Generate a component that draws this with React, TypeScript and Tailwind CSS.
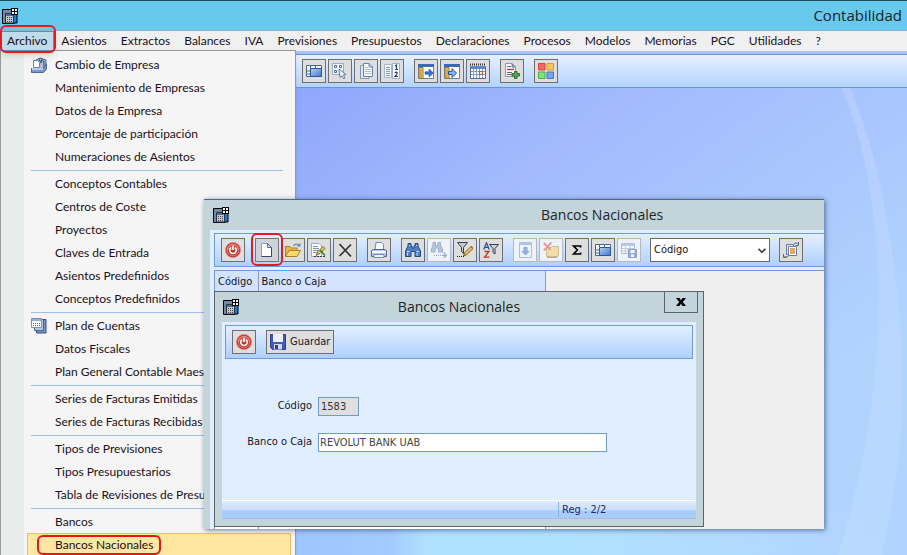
import React from 'react';

const navy = '#1f3f78';

interface IconProps {
  children: React.ReactNode;
}

const Icon: React.FC<IconProps> = ({ children }) => (
  <svg viewBox="0 0 16 16" className="size-4 shrink-0" fill="none" aria-hidden="true">
    {children}
  </svg>
);

const AppIcon = () => (
  <Icon>
    <path d="M0.5 1.5H12V15.5H0.5Z" fill="#6d8aab" stroke="#000" />
    <path d="M11 5H15V15H11Z" fill="#1d7be0" stroke="#000" />
    <path d="M3.5 5.5H11.5V15H3.5Z" fill="#c3c8cd" stroke="#2a3440" />
    <path d="M4 6H11V8H4Z" fill="#4d6f94" />
    <path d="M5 9.5H6M7 9.5H8M9 9.5H10M5 11.5H6M7 11.5H8M9 11.5H10M5 13.5H6M7 13.5H8M9 13.5H10" stroke="#39424e" />
    <path d="M5 11.5H6" stroke="#c23b3b" />
    <path d="M9 0H16V7H9Z" fill="#000" />
    <path d="M10 1H12V3H10ZM13 1H15V3H13ZM10 4H12V6H10ZM13 4H15V6H13Z" fill="#fff" />
  </Icon>
);

const PowerIcon = () => (
  <Icon>
    <circle cx="8" cy="8" r="7.6" fill="#c2322c" stroke="#d98a84" strokeWidth="0.8" />
    <circle cx="8" cy="8" r="5.8" fill="#d8574e" stroke="#f3bab4" strokeWidth="0.7" />
    <path d="M2.4 8A5.6 5.6 0 0 0 13.6 8Z" fill="#c53a33" />
    <path d="M6 5.6A3.3 3.3 0 1 0 10 5.6" stroke="#fff" strokeWidth="1.5" />
    <path d="M8 3.6V8" stroke="#fff" strokeWidth="1.6" />
  </Icon>
);

const WindowIcon = () => (
  <Icon>
    <defs>
      <linearGradient id="pane" x1="0" y1="0" x2="1" y2="1">
        <stop offset="0" stopColor="#b5d2fb" />
        <stop offset="1" stopColor="#3f74cc" />
      </linearGradient>
    </defs>
    <path d="M0.5 2.5H15.5V13.5H0.5Z" fill="#f4f8ff" stroke="#4a6698" />
    <path d="M4.5 5.5H15.5V13.5H4.5Z" fill="url(#pane)" stroke="#2c56a0" />
    <path d="M4.5 2.5V5M9.5 2.5V5M1 8H4M1 11H4" stroke="#4a6698" />
  </Icon>
);

const PointerGridIcon = () => (
  <Icon>
    <path d="M0.5 0.5H11.5V11.5H0.5Z" fill="#eef3fb" stroke="#9dacc6" />
    <path d="M2.5 2.5H4.5V4.5H2.5ZM7.5 2.5H9.5V4.5H7.5ZM2.5 7.5H4.5V9.5H2.5Z" stroke="#516c9c" />
    <path d="M7 6L14 11.4L11.4 12L13 15L11.4 15.8L9.8 12.8L7.8 14.4Z" fill="#e9eef6" stroke="#5c6f92" strokeWidth="0.9" />
  </Icon>
);

const PagesIcon = () => (
  <Icon>
    <path d="M2.5 2.5H11V15.5H2.5Z" fill="#e2eaf6" stroke="#8195b8" />
    <path d="M5.5 0.5H11L14.5 4V13.5H5.5Z" fill="#f7faff" stroke="#6880a8" />
    <path d="M11 0.5V4H14.5" stroke="#6880a8" />
    <path d="M7 4.5H10M7 6.5H13M7 8.5H13M7 10.5H13" stroke="#a9bbd8" />
  </Icon>
);

const NumbersIcon = () => (
  <Icon>
    <path d="M0.5 1.5H7.5V14.5H0.5Z" fill="#f3f6fb" stroke="#a7b4cb" />
    <path d="M2 4.5H6M2 6.5H6M2 8.5H6M2 10.5H6M2 12.5H6" stroke="#8398bd" />
    <path d="M8.5 0.5H15.5V15.5H8.5Z" fill="#fff" stroke="#a0afc8" />
    <path d="M11 3L12.5 2V6.5M11 6.5H14" stroke={navy} strokeWidth="1.2" />
    <path d="M10.8 10Q12.3 8.4 13.2 9.8Q13.4 11 11 13.5H14" stroke={navy} strokeWidth="1.2" />
  </Icon>
);

const PanelArrowIcon = ({ near }: { near?: boolean }) => (
  <Icon>
    <path d="M0.5 1.5H15.5V15.5H0.5Z" fill="#fff" stroke="#5f7fb6" />
    <path d="M0 1H16V4H0Z" fill="#3a69b8" />
    <path d="M1 4.5H5V15.5H1Z" fill="#eec95d" stroke="#96782a" />
    <path d="M3 6V15" stroke="#b6913a" />
    {near ? (
      <path d="M4.5 8.5H8V5.5L12.5 10L8 14.5V11.5H4.5Z" fill="#8eb4ef" stroke="#2550a0" />
    ) : (
      <path d="M7 8.8H11V6L15.5 10L11 14V11.2H7Z" fill="#3973cf" stroke="#2550a0" strokeWidth="0.6" />
    )}
  </Icon>
);

const CalendarIcon = () => (
  <Icon>
    <path d="M0.5 3.5H15.5V15.5H0.5Z" fill="#fff" stroke="#4a6ca4" />
    <path d="M1 3H15V6H1Z" fill="#5f88cb" />
    <path d="M0 1.5H16" stroke="#333" strokeWidth="2" strokeDasharray="1 1" />
    <path d="M3.5 6V15M6.5 6V15M9.5 6V15M12.5 6V15M1 8.5H15M1 11.5H15" stroke="#7f9ccb" />
    <path d="M9.5 8.5H12.5V11.5H9.5Z" stroke="#d0483e" />
  </Icon>
);

const AddDocIcon = () => (
  <Icon>
    <path d="M1.5 0.5H8L11.5 4V13.5H1.5Z" fill="#f7f9fd" stroke="#8c98ab" />
    <path d="M8 0.5V4H11.5" fill="#7a8799" stroke="#7a8799" />
    <path d="M3 3.5H7M3 9.5H8M3 11.5H8" stroke="#666" />
    <path d="M3 6.5H10" stroke="#c8393e" strokeWidth="1.4" />
    <path d="M10.5 8.5H13V10.5H15.5V13H13V15.5H10.5V13H8V10.5H10.5Z" fill="#5aa558" stroke="#2c6e33" />
  </Icon>
);

const TilesIcon = () => (
  <Icon>
    <path d="M0.5 0.5H7V7H0.5Z" fill="#ee6a63" stroke="#d3463f" />
    <path d="M9 0.5H15.5V7H9Z" fill="#f7c55b" stroke="#da9c2d" />
    <path d="M0.5 9H7V15.5H0.5Z" fill="#82df7d" stroke="#4bb04c" />
    <path d="M9 9H15.5V15.5H9Z" fill="#76a5ee" stroke="#4778cd" />
  </Icon>
);

const NewDocIcon = () => (
  <Icon>
    <path d="M2.5 1.5H8.5L12.5 5.5V14.5H2.5Z" fill="#fff" stroke="#8fa0bd" />
    <path d="M8.5 1.5V5.5H12.5Z" fill="#cddaee" stroke="#5d7195" />
    <path d="M12.5 5.5V14.5H2.5" stroke="#35486c" />
  </Icon>
);

const OpenIcon = () => (
  <Icon>
    <path d="M0.5 14.5V4.5H5L6.5 6H12V8.5" fill="#e9b93f" stroke="#a98129" />
    <path d="M0.5 14.5L4 8.5H15.5L12 14.5Z" fill="#fbd96c" stroke="#a98129" />
    <path d="M8.5 4Q11 0.5 14 3.2M14.8 1.2V4H12" stroke="#6482b3" strokeWidth="1.2" />
  </Icon>
);

const EditIcon = () => (
  <Icon>
    <path d="M0.5 1.5H8L10.5 4V14.5H0.5Z" fill="#fafcff" stroke="#9dacc7" />
    <path d="M2 4.5H7M2 6.5H8M2 8.5H8M2 10.5H6" stroke="#7a91b8" />
    <path d="M5 13.5L7 9.5L12 4.5L14 6.5L9 11.5Z" fill="#e6c452" stroke="#5d6428" strokeWidth="0.9" />
    <path d="M9 8L14 13.5" stroke="#3e7d41" strokeWidth="1.6" />
    <path d="M3 14.5H15" stroke="#2e3b50" strokeDasharray="2 1" />
  </Icon>
);

const DeleteIcon = () => (
  <Icon>
    <path d="M2.5 2L14 14.5M14 2.5L2.5 14" stroke="#333" strokeWidth="1.7" />
  </Icon>
);

const PrintIcon = () => (
  <Icon>
    <path d="M4 8L5 0.5H10.5L12.5 2.5V8" fill="#fff" stroke="#7089b2" />
    <path d="M0.5 8.5L2.5 7.5H13.5L15.5 8.5V14.5H0.5Z" fill="#b9cae5" stroke="#496594" />
    <path d="M1 10H15" stroke="#f6faff" strokeWidth="2" />
    <path d="M3 12.5H13V15.5H3Z" fill="#f0f5fc" stroke="#7089b2" />
  </Icon>
);

const FindIcon = () => (
  <Icon>
    <path d="M3 1.5H6V4H7V6H9V4H10V1.5H13V4L15.5 9V14.5H10V9.5H6V14.5H0.5V9L3 4Z" fill="#4f7fc8" stroke="#234a85" />
    <path d="M2 9.5H4.5M11.5 9.5H14M4 3.5H5M11 3.5H12M2.5 11V13.5M12 11V13.5" stroke="#d7e6fc" />
  </Icon>
);

const FindNextIcon = () => (
  <Icon>
    <path d="M2 0.5H4.5V3.5H7V0.5H9.5V3L11.5 7V10H7.5V6H4V10H0.5V7L2 3.5Z" fill="#7f9cce" stroke="#4c6ba5" />
    <path d="M3 13.5H11" stroke="#3b62a4" strokeDasharray="1 1" />
    <path d="M11 13.5H15.5M12.5 10.5L15.5 13.5L12.5 16" stroke="#3b62a4" strokeWidth="1.2" />
  </Icon>
);

const FilterEditIcon = () => (
  <Icon>
    <path d="M0.5 0.5H10.5L6.5 5.5V11.5L4.5 9.5V5.5Z" fill="#c5ccd6" stroke="#343d4c" />
    <path d="M6.5 14L8 10.5L14 4.5L16 6.5L10 12.5Z" fill="#edc260" stroke="#70501d" strokeWidth="0.9" />
    <path d="M14 4.5L16 6.5" stroke="#bd4d49" strokeWidth="1.4" />
    <path d="M0 14.5H7" stroke="#222" strokeDasharray="1 1" />
  </Icon>
);

const SortFilterIcon = () => (
  <Icon>
    <path d="M0.8 7.5L3.5 0.8L6.2 7.5M1.8 5.3H5.2" stroke="#2d5499" strokeWidth="1.3" />
    <path d="M1.5 9.5H6L1.5 15.2H6.5" stroke="#b6363b" strokeWidth="1.3" />
    <path d="M6.5 2.5H15.5L12 6.5V12L10 10.5V6.5Z" fill="#cdd3dc" stroke="#343d4c" />
  </Icon>
);

const DownloadIcon = () => (
  <Icon>
    <path d="M2.5 0.5H14.5V15.5H2.5Z" fill="#edf3fc" stroke="#6c8cc0" />
    <path d="M2.5 0.5H14.5V3H2.5Z" fill="#7197d2" />
    <path d="M7 5.5H10V9.5H12L8.5 13L5 9.5H7Z" fill="#3e76cc" stroke="#2858a4" />
  </Icon>
);

const RemoveFolderIcon = () => (
  <Icon>
    <path d="M3.5 14.5V5.5H8L9.5 4.5H15.5V12.5L13.5 14.5Z" fill="#f2cb5c" stroke="#b0852c" />
    <path d="M4 15.5H14L15.5 13" stroke="#8c6a24" />
    <path d="M0.8 0.8L7.5 8M8.5 0.5L0.8 8.5" stroke="#e0301f" strokeWidth="1.8" />
  </Icon>
);

const SumIcon = () => (
  <Icon>
    <path d="M11.6 5.6V4H4.6L8.4 8L4.6 12H11.6V10.4" stroke="#000" strokeWidth="1.7" />
  </Icon>
);

const SaveGridIcon = () => (
  <Icon>
    <path d="M0.5 1.5H13.5V11.5H0.5Z" fill="#fff" stroke="#7493c6" />
    <path d="M1 2H13V4H1Z" fill="#8aa9dd" />
    <path d="M4.5 2V11M9 2V11M1 6.5H13M1 9H13" stroke="#8ba6d2" />
    <path d="M7.5 7.5H15.5V15.5H7.5Z" fill="#4f66b5" stroke="#33478f" />
    <path d="M9.5 8H13.5V11H9.5ZM10 12.5H13V15H10Z" fill="#fff" />
  </Icon>
);

const CopyIcon = () => (
  <Icon>
    <path d="M3.5 2.5H10.5V12.5H3.5Z" fill="#dfe8f6" stroke="#5f7db0" />
    <path d="M5.5 4.5H13.5V13.5H5.5Z" fill="#fff" stroke="#5f7db0" />
    <path d="M7 7H12M7 9H12M7 11H12" stroke="#e8872e" strokeWidth="1.3" />
    <path d="M10.5 2.5Q12 0 14.5 1.5M15.5 0V3.5H12.5" stroke="#5a6472" />
    <path d="M5.5 14Q4 16 1.5 14.5M0.5 12V15.5H3" stroke="#5a6472" />
  </Icon>
);

const DisketteIcon = () => (
  <Icon>
    <path d="M0.5 0.5H15.5V15.5H2.5L0.5 13.5Z" fill="#4459b8" stroke="#2f3f90" />
    <path d="M3 0H13V8H3Z" fill="#eaf0fb" />
    <path d="M4 10H12V15.5H4Z" fill="#d2d8e6" />
    <path d="M5 11H8V15H5Z" fill="#2f3f90" />
  </Icon>
);

const CompanyIcon = () => (
  <Icon>
    <path d="M5 3L9 1L15 3V12L11 13H5Z" fill="#a9bede" stroke="#466189" />
    <path d="M8 2L10 6L11 2.5L13 5V11" stroke="#2e4871" />
    <path d="M2.5 3.5H6.5L8.5 5.5V10.5H2.5Z" fill="#fff" stroke="#6b83aa" />
    <path d="M0.5 11.5H12.5L15.5 7V12L12.5 15.5H0.5Z" fill="#7898c9" stroke="#4c6790" />
    <path d="M1 12H12" stroke="#d6e4f7" strokeWidth="1.5" />
  </Icon>
);

const PlanIcon = () => (
  <Icon>
    <path d="M5.5 1.5H15V15H5.5Z" fill="#7595c6" stroke="#35517f" />
    <path d="M3.5 1.5H12.5V12.5H3.5Z" fill="#b5c8e6" stroke="#45628f" />
    <path d="M0.5 0.5H10.5V9.5H0.5Z" fill="#fff" stroke="#7c93b8" />
    <path d="M1 1H10V3H1Z" fill="#93aed6" />
    <path d="M2 5.5H10M2 7.5H10" stroke="#47628f" strokeDasharray="1 1" />
  </Icon>
);

interface ToolButtonProps {
  label: string;
  disabled?: boolean;
  pressed?: boolean;
  children: React.ReactNode;
}

const ToolButton: React.FC<ToolButtonProps> = ({ label, disabled, pressed, children }) => (
  <button
    type="button"
    aria-label={label}
    title={label}
    disabled={disabled}
    className={`flex size-6 shrink-0 items-center justify-center border ${
      disabled ? 'border-[#b4b8bf] bg-[#eff3f9]' : pressed ? 'border-[#777] bg-[#cfd2d6]' : 'border-[#6f6f6f] bg-[#dedede]'
    }`}
  >
    <span className={disabled ? 'opacity-50' : ''}>{children}</span>
  </button>
);

const menuBar = [
  'Archivo', 'Asientos', 'Extractos', 'Balances', 'IVA', 'Previsiones', 'Presupuestos',
  'Declaraciones', 'Procesos', 'Modelos', 'Memorias', 'PGC', 'Utilidades', '?',
];

const archivoMenu = [
  ['Cambio de Empresa', 'Mantenimiento de Empresas', 'Datos de la Empresa', 'Porcentaje de participación', 'Numeraciones de Asientos'],
  ['Conceptos Contables', 'Centros de Coste', 'Proyectos', 'Claves de Entrada', 'Asientos Predefinidos', 'Conceptos Predefinidos'],
  ['Plan de Cuentas', 'Datos Fiscales', 'Plan General Contable Maestro'],
  ['Series de Facturas Emitidas', 'Series de Facturas Recibidas'],
  ['Tipos de Previsiones', 'Tipos Presupuestarios', 'Tabla de Revisiones de Presupuestos'],
  ['Bancos', 'Bancos Nacionales'],
];

const menuIcons: Record<string, React.ReactNode> = {
  'Cambio de Empresa': <CompanyIcon />,
  'Plan de Cuentas': <PlanIcon />,
};

const ArchivoMenu = () => (
  <div className="absolute top-full left-0 z-10 -mt-px w-[296px] border border-[#9a9a9a] bg-[#f5f5f5] shadow-sm">
    <div className="border-l-[23px] border-[#e8edeb] py-0.5 pr-1 pl-[3px]">
      {archivoMenu.map((group, i) => (
        <React.Fragment key={i}>
          {i > 0 && <hr className="mt-0.5 mr-2 mb-px ml-1 border-[#9dbfe8]" />}
          {group.map((item) => {
            const active = item === 'Bancos Nacionales';
            return (
              <button
                key={item}
                type="button"
                className={`flex h-[23px] w-full items-center border whitespace-nowrap ${
                  active ? 'border-[#eebc6b] bg-[#ffe6a1]' : 'border-transparent'
                }`}
              >
                <span className="flex w-[27px] shrink-0 pl-[3px]">{menuIcons[item]}</span>
                {active ? (
                  <span className="relative">
                    {item}
                    <span className="absolute -top-px -right-2 -bottom-px -left-[18px] rounded-md border-2 border-[#e8141c]" />
                  </span>
                ) : (
                  item
                )}
              </button>
            );
          })}
        </React.Fragment>
      ))}
    </div>
  </div>
);

const MenuBar = () => (
  <nav className="relative flex h-5 bg-[#f0f0f0] font-['Lato','Open_Sans',sans-serif] text-[12px] text-[#1a1020]">
    {menuBar.map((item) =>
      item === 'Archivo' ? (
        <div key={item} className="relative z-20">
          <button type="button" className="h-5 border border-[#5c8fae] bg-[#bfdcea] px-1.5">
            {item}
          </button>
          <span className="pointer-events-none absolute -top-1.5 -right-0.5 -bottom-0.5 left-0 rounded-md border-2 border-[#e01b22] shadow-md" />
        </div>
      ) : (
        <button key={item} type="button" className="h-5 px-[7px]">
          {item}
        </button>
      ),
    )}
    <ArchivoMenu />
  </nav>
);

const MainToolbar = () => (
  <div className="border-t-[3px] border-[#abc1f7]">
    <div className="flex h-[34px] items-center gap-2.5 border-y border-[#6a93d2] bg-linear-to-b from-[#e7f1ff] to-[#b2d3fd] pl-[302px]">
      <div className="flex gap-0.5">
        <ToolButton label="Ventana"><WindowIcon /></ToolButton>
        <ToolButton label="Seleccionar"><PointerGridIcon /></ToolButton>
        <ToolButton label="Documentos"><PagesIcon /></ToolButton>
        <ToolButton label="Numeración"><NumbersIcon /></ToolButton>
      </div>
      <div className="flex gap-0.5">
        <ToolButton label="Panel derecho"><PanelArrowIcon /></ToolButton>
        <ToolButton label="Panel izquierdo"><PanelArrowIcon near /></ToolButton>
        <ToolButton label="Calendario"><CalendarIcon /></ToolButton>
      </div>
      <ToolButton label="Añadir documento"><AddDocIcon /></ToolButton>
      <ToolButton label="Módulos"><TilesIcon /></ToolButton>
    </div>
  </div>
);

const BankDialog = () => (
  <section className="absolute top-[91px] left-[10px] w-[490px] border border-[#5b6468] bg-[#c3d5da] px-[7px] pb-[7px]">
    <header className="relative flex h-[30px] items-center">
      <span className="absolute left-px"><AppIcon /></span>
      <h2 className="flex-1 text-center font-['Open_Sans',sans-serif] text-sm text-[#1b2428]">Bancos Nacionales</h2>
      <button
        type="button"
        aria-label="Cerrar"
        className="absolute top-0 -right-0.5 flex h-[21px] w-[34px] items-center justify-center border border-t-0 border-[#5b6468]"
      >
        <svg viewBox="0 0 10 8" className="h-2 w-2.5" aria-hidden="true">
          <path d="M0 0H3.5L5 2.2L6.5 0H10L6.8 4L10 8H6.5L5 5.8L3.5 8H0L3.2 4Z" fill="#000" />
        </svg>
      </button>
    </header>
    <form className="bg-[#e1eeff]">
      <div className="px-[3px] pt-[3px]">
        <div className="flex h-[34px] items-center gap-2.5 border border-[#6f9bd8] bg-linear-to-b from-[#e4efff] to-[#aed0fd] pl-1.5">
          <ToolButton label="Salir"><PowerIcon /></ToolButton>
          <button type="button" className="flex h-6 items-center gap-1 border border-[#6f6f6f] bg-[#dedede] px-[3px]">
            <DisketteIcon />
            Guardar
          </button>
        </div>
      </div>
      <div className="grid grid-cols-[90px_1fr] items-center gap-x-1.5 gap-y-[17px] pt-[38px] pb-12">
        <label htmlFor="codigo" className="text-right">Código</label>
        <input id="codigo" readOnly defaultValue="1583" className="h-[19px] w-[41px] border border-[#6f9bd0] bg-[#dfdfdf] px-0.5 text-[#333]" />
        <label htmlFor="banco" className="text-right">Banco o Caja</label>
        <input id="banco" defaultValue="REVOLUT BANK UAB" className="h-[19px] w-[289px] border border-[#6f9bd0] bg-white px-px text-[#444]" />
      </div>
      <footer className="flex h-[19px] items-center border-t border-b border-t-white border-b-[#a3bedf] bg-linear-to-b from-[#e0ebff] from-0% via-[#c9defe] via-50% to-[#aaccfd] to-60%">
        <span className="flex-1" />
        <span className="h-[15px] w-[138px] border-l border-[#8fb2e0] pl-[3px] leading-4 text-[#1b2a6b]">Reg : 2/2</span>
      </footer>
    </form>
  </section>
);

const BanksWindow = () => (
  <section className="absolute top-[111px] left-[204px] flex h-[330px] w-[620px] flex-col border-t border-[#4f6a80] bg-[#c3d5da] pl-1.5 font-['DejaVu_Sans_Condensed','DejaVu_Sans',sans-serif] text-[11px] text-[#15151f] shadow-[1px_1px_5px_rgba(40,60,100,0.7)]">
    <header className="flex h-[30px] shrink-0 items-center pl-[3px]">
      <AppIcon />
      <h1 className="flex-1 pl-[312px] font-['Open_Sans',sans-serif] text-sm text-[#1b2428]">Bancos Nacionales</h1>
    </header>
    <div className="flex flex-1 flex-col bg-[#e1eeff] pt-[3px] pl-1">
      <div className="flex h-[34px] items-center gap-2.5 border border-r-0 border-[#6f9bd8] bg-linear-to-b from-[#e4efff] to-[#aed0fd] pl-1.5">
        <ToolButton label="Salir"><PowerIcon /></ToolButton>
        <div className="flex gap-0.5">
          <div className="relative z-10">
            <ToolButton label="Nuevo" pressed><NewDocIcon /></ToolButton>
            <span className="pointer-events-none absolute -top-[5px] -right-1 -bottom-1 -left-1 rounded-md border-2 border-[#e01b22]" />
          </div>
          <ToolButton label="Abrir"><OpenIcon /></ToolButton>
          <ToolButton label="Modificar"><EditIcon /></ToolButton>
          <ToolButton label="Borrar"><DeleteIcon /></ToolButton>
        </div>
        <ToolButton label="Imprimir"><PrintIcon /></ToolButton>
        <div className="flex gap-0.5">
          <ToolButton label="Buscar"><FindIcon /></ToolButton>
          <ToolButton label="Buscar siguiente" disabled><FindNextIcon /></ToolButton>
          <ToolButton label="Editar filtro"><FilterEditIcon /></ToolButton>
          <ToolButton label="Ordenar"><SortFilterIcon /></ToolButton>
        </div>
        <div className="flex gap-0.5">
          <ToolButton label="Descargar" disabled><DownloadIcon /></ToolButton>
          <ToolButton label="Quitar" disabled><RemoveFolderIcon /></ToolButton>
          <ToolButton label="Totales"><SumIcon /></ToolButton>
          <ToolButton label="Columnas"><WindowIcon /></ToolButton>
          <ToolButton label="Guardar columnas" disabled><SaveGridIcon /></ToolButton>
        </div>
        <div className="relative -mx-px">
          <select
            aria-label="Buscar por"
            defaultValue="Código"
            className="block h-6 w-[120px] appearance-none border border-[#6b6b6b] bg-white px-[3px] text-[#1a1020]"
          >
            <option>Código</option>
            <option>Banco o Caja</option>
          </select>
          <svg viewBox="0 0 8 6" className="pointer-events-none absolute top-2.5 right-1 h-1.5 w-2" fill="none" aria-hidden="true">
            <path d="M0.5 0.8L4 4.3L7.5 0.8" stroke="#444" strokeWidth="1.8" />
          </svg>
        </div>
        <ToolButton label="Copiar"><CopyIcon /></ToolButton>
      </div>
      <div className="mt-[3px] flex-1 border-t border-l border-[#6f9bd8] bg-[#efefef]">
        <table className="h-full w-[331px] border-collapse bg-white">
          <thead>
            <tr className="h-[21px] bg-[#d2e2ff] text-left">
              <th className="w-[43px] border-r border-[#8b9bb3] pt-0.5 pl-[3px] font-normal">Código</th>
              <th className="border-r border-[#8b9bb3] pt-0.5 pl-[3px] font-normal">Banco o Caja</th>
            </tr>
          </thead>
          <tbody>
            <tr>
              <td className="border-r border-[#8b9bb3]" />
              <td className="border-r border-[#8b9bb3]" />
            </tr>
          </tbody>
        </table>
      </div>
    </div>
    <BankDialog />
  </section>
);

const Wallpaper = () => (
  <svg viewBox="0 0 907 467" preserveAspectRatio="none" className="absolute inset-0 size-full" aria-hidden="true">
    <defs>
      <linearGradient id="sky" x1="0.3" y1="0" x2="1" y2="0.5">
        <stop offset="0" stopColor="#8ea5fb" />
        <stop offset="0.4" stopColor="#a3bbfd" />
        <stop offset="1" stopColor="#b0d4fe" />
      </linearGradient>
      <linearGradient id="floor" x1="0" y1="0" x2="1" y2="0">
        <stop offset="0.3" stopColor="#9cc5fe" />
        <stop offset="0.43" stopColor="#a2cbfe" />
        <stop offset="0.47" stopColor="#b0e0ff" />
        <stop offset="0.6" stopColor="#b0e2ff" />
        <stop offset="0.85" stopColor="#b2d9ff" />
        <stop offset="1" stopColor="#b0d3ff" stopOpacity="0" />
      </linearGradient>
      <linearGradient id="beam" x1="0" y1="0" x2="0" y2="1">
        <stop offset="0" stopColor="#c0d4ff" stopOpacity="0.5" />
        <stop offset="1" stopColor="#bbdcff" stopOpacity="0.7" />
      </linearGradient>
    </defs>
    <path d="M0 0H907V467H0Z" fill="url(#sky)" />
    <path d="M0 420H907V467H0Z" fill="url(#floor)" />
    <path d="M842 0Q872 70 878 180Q884 320 838 467H882Q908 340 902 260Q890 90 850 0Z" fill="url(#beam)" />
  </svg>
);

export default function App() {
  return (
    <div className="relative flex h-screen flex-col overflow-hidden bg-[#a3bcfd] font-['Open_Sans','Noto_Sans',sans-serif]">
      <header className="flex h-[31px] shrink-0 items-center justify-between border-t border-b border-t-[#1f4a5c] border-b-[#8fb3bf] bg-[#67caec] pr-[5px] pl-[2px]">
        <AppIcon />
        <span className="text-[15px] text-[#1b2428]">Contabilidad</span>
      </header>
      <div className="relative z-10 shrink-0">
        <MenuBar />
      </div>
      <MainToolbar />
      <main className="relative flex-1">
        <Wallpaper />
        <div className="absolute inset-0" />
      </main>
      <div className="absolute top-[88px] left-0 z-20">
        <BanksWindow />
      </div>
    </div>
  );
}
